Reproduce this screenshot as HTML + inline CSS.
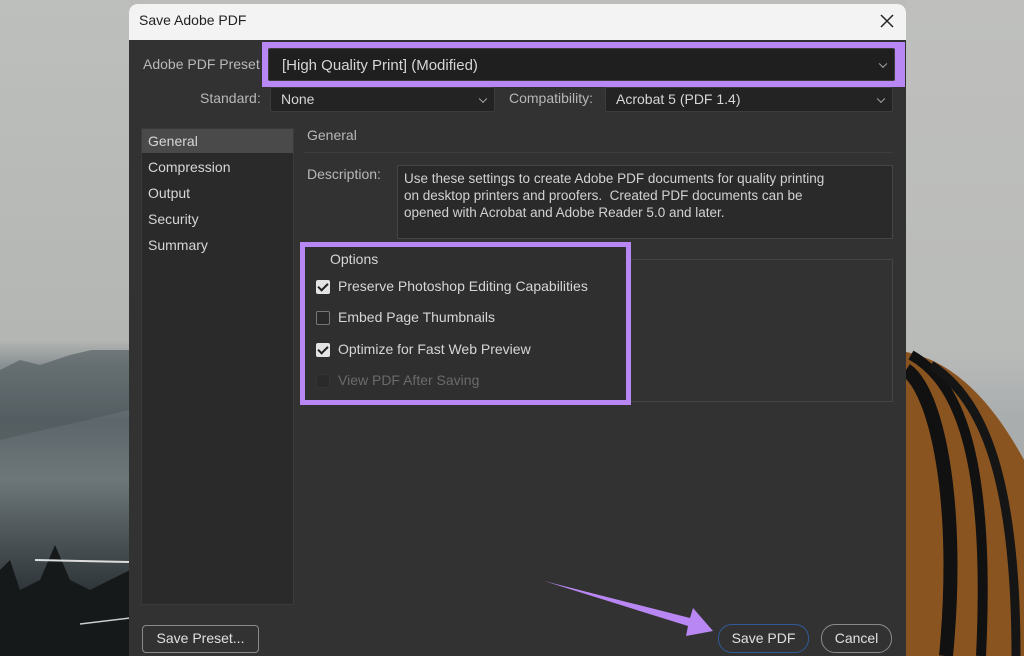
<!DOCTYPE html>
<html><head><style>
*{margin:0;padding:0;box-sizing:border-box}
html,body{width:1024px;height:656px;overflow:hidden}
body{position:relative;font-family:"Liberation Sans",sans-serif;background:#bcbdbb}
.a{position:absolute}
.t{position:absolute;color:#d6d6d6;font-size:14px;white-space:nowrap}
.lbl{color:#b8b8b8}
.dd{position:absolute;background:#232323;border:1px solid #3c3c3c;border-radius:2px}
.chev{position:absolute;right:8px;top:50%;width:6px;height:6px;border-right:1.5px solid #aaa;border-bottom:1.5px solid #aaa;transform:translateY(-70%) rotate(45deg)}
.cb{position:absolute;width:14px;height:14px;border-radius:2px}
.on{background:#e4e4e4}
.on::after{content:"";position:absolute;left:4px;top:1px;width:4px;height:8px;border-right:2px solid #222;border-bottom:2px solid #222;transform:rotate(45deg)}
.off{border:1px solid #777;background:#2a2a2a}
.btn{position:absolute;border:1.5px solid #8a8a8a;border-radius:14px;color:#e0e0e0;font-size:14px;text-align:center}
</style></head><body>
<!-- background -->
<div class="a" style="left:0;top:0;width:130px;height:656px;background:linear-gradient(#bdbfbd 0,#b4b6b3 340px,#8a9194 365px,#5d676b 420px,#6d7679 480px,#4a5256 540px,#2a3033 600px)"></div>
<svg class="a" style="left:0;top:350px" width="130" height="306"><path d="M0 20 L20 10 L40 15 L70 5 L100 -2 L130 -5 L130 60 L0 90Z" fill="#4f585b" opacity=".6"/><path d="M0 220 L10 210 L20 240 L40 230 L55 195 L70 230 L90 240 L110 230 L130 220 L130 306 L0 306Z" fill="#15191a"/><path d="M35 210 L130 212" stroke="#ddd" stroke-width="2"/><path d="M80 274 L130 268 M42 312 L130 316" stroke="#ccc" stroke-width="1.5"/></svg>
<div class="a" style="left:906px;top:0;width:118px;height:656px;background:linear-gradient(#bfc0be 0,#b9bbb9 350px,#a9adae 420px)"></div>
<svg class="a" style="left:906px;top:350px" width="118" height="306"><path d="M0 2 C40 10 80 40 118 110 L118 306 L0 306Z" fill="#8a5420"/><path d="M0 20 C30 40 55 150 40 306" stroke="#111" stroke-width="14" fill="none"/><path d="M5 5 C50 30 85 100 75 306" stroke="#111" stroke-width="10" fill="none"/><path d="M25 15 C70 45 110 110 110 306" stroke="#151515" stroke-width="9" fill="none"/></svg>
<!-- dialog -->
<div class="a" style="left:129px;top:4px;width:777px;height:652px;background:#323232;border-radius:8px 8px 0 0;overflow:hidden">
<div class="a" style="left:0;top:0;width:777px;height:36px;background:#f3f3f3"></div>
</div>
<div class="t" style="left:139px;top:12px;color:#222">Save Adobe PDF</div>
<svg class="a" style="left:880px;top:14px" width="14" height="14"><path d="M1 1 L13 13 M13 1 L1 13" stroke="#222" stroke-width="1.5"/></svg>
<div class="t lbl" style="left:143px;top:56px">Adobe PDF Preset</div>
<div class="a" style="left:262px;top:42px;width:643px;height:45px;background:#b987f3"></div>
<div class="dd" style="left:268px;top:48px;width:627px;height:33px;background:#1f1f1f"><div class="chev"></div></div>
<div class="t" style="left:282px;top:57px;font-size:15px">[High Quality Print] (Modified)</div>
<div class="t lbl" style="left:200px;top:90px">Standard:</div>
<div class="dd" style="left:270px;top:87px;width:225px;height:25px"><div class="chev"></div></div>
<div class="t" style="left:281px;top:91px">None</div>
<div class="t lbl" style="left:509px;top:90px">Compatibility:</div>
<div class="dd" style="left:605px;top:87px;width:288px;height:25px"><div class="chev"></div></div>
<div class="t" style="left:616px;top:91px">Acrobat 5 (PDF 1.4)</div>
<!-- left panel -->
<div class="a" style="left:141px;top:128px;width:153px;height:477px;background:#2a2a2a;border:1px solid #3a3a3a"></div>
<div class="a" style="left:142px;top:129px;width:151px;height:24px;background:#4a4a4a"></div>
<div class="t" style="left:148px;top:133px">General</div>
<div class="t" style="left:148px;top:159px">Compression</div>
<div class="t" style="left:148px;top:185px">Output</div>
<div class="t" style="left:148px;top:211px">Security</div>
<div class="t" style="left:148px;top:237px">Summary</div>
<div class="t lbl" style="left:307px;top:127px">General</div>
<div class="a" style="left:303px;top:152px;width:590px;height:1px;background:#3e3e3e"></div>
<div class="t lbl" style="left:307px;top:166px">Description:</div>
<div class="a" style="left:397px;top:165px;width:496px;height:74px;background:#2a2a2a;border:1px solid #464646"></div>
<div class="t" style="left:404px;top:170px;font-size:13.5px;line-height:17px;color:#d2d2d2">Use these settings to create Adobe PDF documents for quality printing<br>on desktop printers and proofers.&nbsp; Created PDF documents can be<br>opened with Acrobat and Adobe Reader 5.0 and later.</div>
<!-- options -->
<div class="a" style="left:307px;top:259px;width:586px;height:143px;border:1px solid #444"></div>
<div class="a" style="left:300px;top:242px;width:331px;height:163px;border:5px solid #b987f3;background:#2f2f2f"></div>
<div class="t" style="left:330px;top:251px">Options</div>
<div class="cb on" style="left:316px;top:280px"></div>
<div class="t" style="left:338px;top:278px">Preserve Photoshop Editing Capabilities</div>
<div class="cb off" style="left:316px;top:311px"></div>
<div class="t" style="left:338px;top:309px">Embed Page Thumbnails</div>
<div class="cb on" style="left:316px;top:343px"></div>
<div class="t" style="left:338px;top:341px">Optimize for Fast Web Preview</div>
<div class="cb" style="left:316px;top:374px;background:#2a2a2a;border:1px solid #353535"></div>
<div class="t" style="left:338px;top:372px;color:#6a6a6a">View PDF After Saving</div>
<!-- buttons -->
<div class="btn" style="left:142px;top:625px;width:117px;height:28px;border-radius:4px;line-height:25px">Save Preset...</div>
<div class="btn" style="left:718px;top:624px;width:91px;height:29px;line-height:26px;border-color:#2f5b95">Save PDF</div>
<div class="btn" style="left:821px;top:624px;width:71px;height:29px;line-height:26px">Cancel</div>
<svg class="a" style="left:0;top:0" width="1024" height="656"><path d="M544 581 L690 618 L693 608 L713 631 L686 636 L688 626 Z" fill="#b987f3"/></svg>
</body></html>
